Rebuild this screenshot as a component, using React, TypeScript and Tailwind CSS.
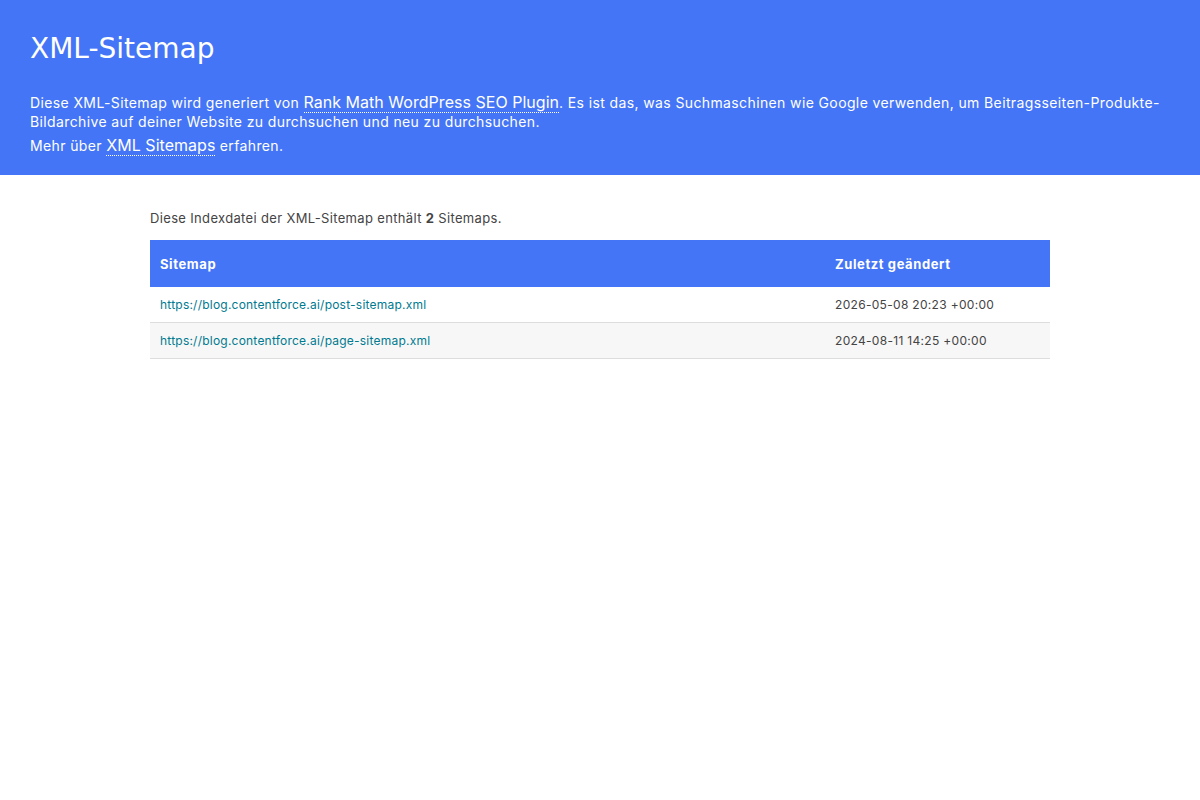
export default function App() {
  const rows = [
    { url: 'https://blog.contentforce.ai/post-sitemap.xml', date: '2026-05-08 20:23 +00:00' },
    { url: 'https://blog.contentforce.ai/page-sitemap.xml', date: '2024-08-11 14:25 +00:00' },
  ];

  return (
    <div className="min-h-[800px] bg-white text-[13px] text-[#444] font-['Inter',sans-serif]">
      <div className="h-[175px] bg-[#4475f6] px-[30px] pt-[31px] text-white">
        <h1 className="text-[28px] leading-[36px] font-normal font-['DejaVu_Sans',sans-serif]">XML-Sitemap</h1>
        <p className="mt-[26px] text-[14px] leading-[19px] tracking-[0.38px]">
          Diese XML-Sitemap wird generiert von{' '}
          <a className="text-[16px] tracking-[0.03px] border-b border-dotted border-white">Rank Math WordPress SEO Plugin</a>. Es ist das, was Suchmaschinen wie Google verwenden, um Beitragsseiten-Produkte-Bildarchive auf deiner Website zu durchsuchen und neu zu durchsuchen.
        </p>
        <p className="mt-[5px] text-[14px] leading-[19px] tracking-[0.38px]">
          Mehr über <a className="text-[16px] tracking-[0.03px] border-b border-dotted border-white">XML Sitemaps</a> erfahren.
        </p>
      </div>
      <div className="mx-auto w-[900px] pt-[34px]">
        <p className="h-[31px] leading-[18px] tracking-[0.34px]">
          Diese Indexdatei der XML-Sitemap enthält <strong>2</strong> Sitemaps.
        </p>
        <div className="flex h-[47px] items-center bg-[#4475f6] pt-[2px] font-bold tracking-[0.6px] text-white">
          <div className="w-[675px] px-[10px]">Sitemap</div>
          <div className="flex-1 px-[10px]">Zuletzt geändert</div>
        </div>
        {rows.map((row, i) => (
          <div key={row.url} className={`flex h-[36px] items-center border-b border-[#ddd] text-[12px] ${i % 2 ? 'bg-[#f7f7f7]' : 'bg-white'}`}>
            <a className="w-[675px] px-[10px] tracking-[0.22px] text-[#007a90]">{row.url}</a>
            <div className="flex-1 px-[10px] tracking-[0.31px]">{row.date}</div>
          </div>
        ))}
      </div>
    </div>
  );
}
